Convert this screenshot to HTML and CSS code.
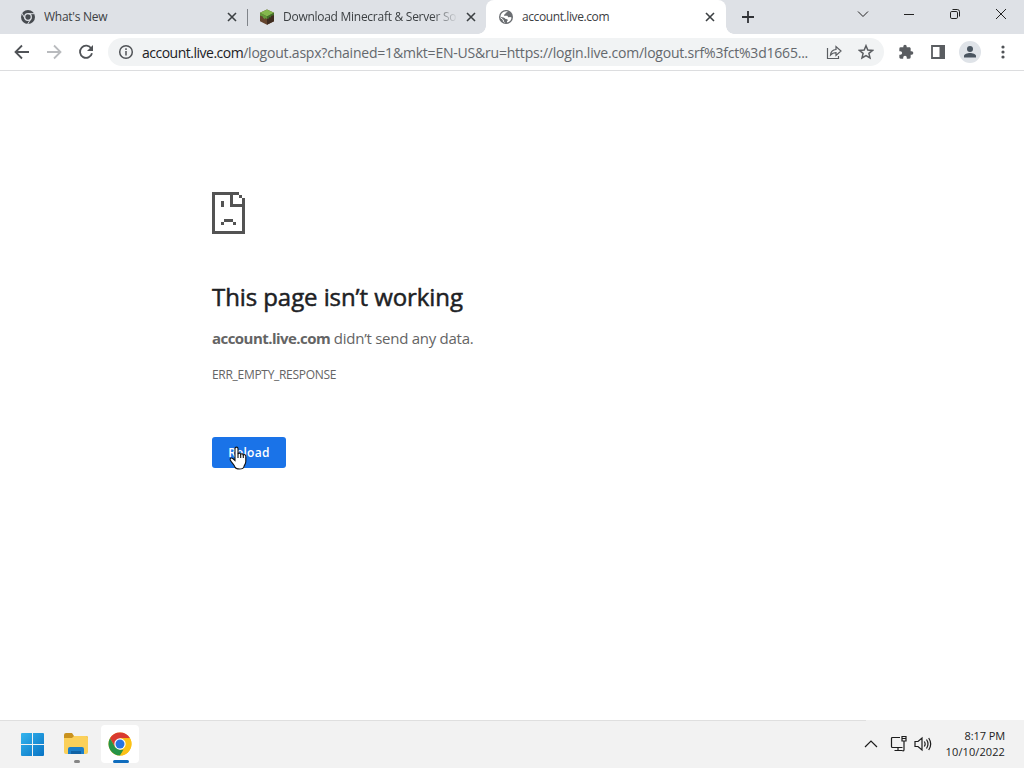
FILE: index.html
```html
<!DOCTYPE html>
<html lang="en">
<head>
    <meta charset="UTF-8">
    <meta name="viewport" content="width=device-width, initial-scale=1.0">
    <title>account.live.com</title>
    <link rel="stylesheet" href="styles.css">
</head>
<body>
    <!-- Tabs -->
    <div class="tabstrip">
        <div class="tab first">
            <svg class="favicon" viewBox="0 0 16 16">
                <circle cx="8" cy="8" r="7" fill="#474b50"/>
                <circle cx="8" cy="8" r="3.3" fill="#474b50" stroke="#dee1e6" stroke-width="1.3"/>
                <path d="M8 4.7h6.4M5.1 9.7L1.9 4.2M10.9 9.7L7.7 15" stroke="#dee1e6" stroke-width="1"/>
            </svg>
            <span class="tab-title">What's New</span>
            <svg class="tab-close" viewBox="0 0 10 10"><path d="M1 1l8 8M9 1L1 9"/></svg>
        </div>
        <div class="tab second">
            <svg class="favicon" viewBox="0 0 16 16">
                <path d="M8 .5l7 3.3v8.4l-7 3.6-7-3.6V3.8z" fill="#65452e"/>
                <path d="M8 .5l7 3.3-7 3.7-7-3.7z" fill="#84b84d"/>
                <path d="M1 3.8l7 3.7V10l-2-1v1.2L4 8.8v-1L1 6.5z" fill="#63983a"/>
                <path d="M15 3.8L8 7.5V10l2-.6V8.3l2 .2V7l3-.8z" fill="#41702a"/>
                <path d="M8 10v5.8l7-3.6V6.2l-3 .8v1.5l-2-.2v1.1z" fill="#3f2c20"/>
            </svg>
            <span class="tab-title fade">Download Minecraft &amp; Server So</span>
            <svg class="tab-close" viewBox="0 0 10 10"><path d="M1 1l8 8M9 1L1 9"/></svg>
        </div>
        <div class="tab active">
            <svg class="favicon" viewBox="0 0 16 16">
                <circle cx="8" cy="8" r="7" fill="#6b6e72"/>
                <path d="M9.6 2.3c-.2 1-.9 1.4-1.900 1.500-.4.7 0 1.200-.8 1.500-.9.2-1.100.8-.7 1.400h3c.7.3.6 1 1 1.500.9.2 1.200-.4 2-.2l1.300.5c0 2.500-2 4.800-4.500 5.100v-1.400c.8-.3 1-1.100.5-1.700-.8-.5-1.800-.2-2.300-1C6.800 8.300 4.500 8.200 2.500 7.900c0-3 2.500-5.600 5.500-5.700z" fill="#fff"/>
                <path d="M2.3 8.6l3 2.3v1.3l1.3 1.3" stroke="#fff" stroke-width="1" fill="none"/>
            </svg>
            <span class="tab-title">account.live.com</span>
            <svg class="tab-close" viewBox="0 0 10 10"><path d="M1 1l8 8M9 1L1 9"/></svg>
        </div>
        <svg class="new-tab" viewBox="0 0 12 12"><path d="M6 0v12M0 6h12"/></svg>
        <div class="window-controls">
            <svg viewBox="0 0 12 12"><path d="M1 3.5l5 5 5-5"/></svg>
            <svg viewBox="0 0 12 12"><path d="M1 6.5h10"/></svg>
            <svg viewBox="0 0 12 12"><rect x="1.5" y="3.5" width="7" height="7" rx="1.3"/><path d="M3.5 1.5H8.300a2.200 2.200 0 0 1 2.200 2.200V8.500"/></svg>
            <svg viewBox="0 0 12 12"><path d="M1 1l10 10M11 1L1 11"/></svg>
        </div>
    </div>

    <!-- Toolbar -->
    <div class="toolbar">
        <svg class="nav" viewBox="0 0 16 16"><path d="M15 8H2M8 1.5L1.5 8 8 14.5"/></svg>
        <svg class="nav disabled" viewBox="0 0 16 16"><path d="M1 8h13M8 1.5L14.5 8 8 14.5"/></svg>
        <svg class="nav" viewBox="0 0 16 16"><path d="M13.3 4.6A6.1 6.1 0 1 0 14 9.3"/><path d="M15 1v6H9z" class="solid"/></svg>
        <div class="omnibox">
            <svg class="info" viewBox="0 0 16 16"><circle cx="8" cy="8" r="6.3"/><path d="M8 7v4.5M8 4.3v1.7"/></svg>
            <span class="url"><b>account.live.com</b>/logout.aspx?chained=1&amp;mkt=EN-US&amp;ru=https://login.live.com/logout.srf%3fct%3d1665...</span>
            <svg class="share" viewBox="0 0 16 16"><path d="M1.5 4v10.500h11v-2.500M4.500 11c.3-3.500 2.200-5.300 5.500-5.500V2.500l5 4.500-5 4.500V8.700c-2.500 0-4 .6-5.500 2.300z"/></svg>
            <svg class="star" viewBox="0 0 16 16"><path d="M8 1.7l1.8 4.300 4.700.4-3.600 3 1.100 4.500L8 11.500l-4 2.400 1.100-4.500-3.600-3 4.700-.4z"/></svg>
        </div>
        <svg class="tool" viewBox="0 0 24 24"><path d="M20.500 11H19V7c0-1.100-.9-2-2-2h-4V3.500a2.500 2.500 0 0 0-5 0V5H4a2 2 0 0 0-2 2v3.800h1.500a2.700 2.700 0 0 1 0 5.400H2V20c0 1.100.9 2 2 2h3.800v-1.500a2.700 2.700 0 0 1 5.400 0V22H17a2 2 0 0 0 2-2v-4h1.500a2.500 2.500 0 0 0 0-5z" fill="#5a5d61"/></svg>
        <svg class="tool" viewBox="0 0 16 16"><path d="M2 2h12v12H2z" fill="none" stroke="#5a5d61" stroke-width="1.8"/><path d="M9.5 1H15v14H9.500z" fill="#5a5d61"/></svg>
        <svg class="avatar" viewBox="0 0 22 22"><circle cx="11" cy="11" r="11" fill="#dfe3e8"/><circle cx="11" cy="8" r="3" fill="#4a5560"/><path d="M5 16.5v-1.500c0-2 3.500-3 6-3s6 1 6 3v1.500z" fill="#4a5560"/></svg>
        <svg class="more" viewBox="0 0 4 14"><circle cx="2" cy="2" r="1.6"/><circle cx="2" cy="7" r="1.6"/><circle cx="2" cy="12" r="1.6"/></svg>
    </div>

    <!-- Error page -->
    <main class="error-page">
        <svg class="sad" viewBox="0 0 11 14" shape-rendering="crispEdges">
            <path d="M0 0h9v1h1v1h1v12H0zM1 1v12h9V5H6V1zM7 1v3h3V2H9V1z" fill-rule="evenodd"/>
            <path d="M3 3h1v2H3zM4 9h3v1H4zM3 10h1v1H3zM7 10h1v1H7z"/>
        </svg>
        <h1>This page isn’t working</h1>
        <p class="summary"><strong>account.live.com</strong> <span>didn’t send any data.</span></p>
        <p class="code">ERR_EMPTY_RESPONSE</p>
        <div class="reload">
            <button>Reload</button>
            <svg class="cursor" viewBox="0 0 18 24">
                <path d="M6 14.5V2.700C6 .6 9 .6 9 2.700V8c.5-1.300 2.500-1 2.700.4.600-1 2.400-.7 2.600.6.800-.8 2.500-.3 2.500 1.200v5.300c0 2.500-1.500 3.500-1.800 5-.3 2-1.500 2.500-4.500 2.500-3.200 0-4-.5-4.700-2.300C5 18.500 2.400 16.500 1.300 14c-.7-1.700 1.200-2.700 2.500-1.500z" fill="#fff" stroke="#111" stroke-width="1.1"/>
                <path d="M9 7.5V12M11.700 8.500V12M14.300 9V12" stroke="#111" stroke-width="1.1"/>
            </svg>
        </div>
    </main>

    <!-- Taskbar -->
    <div class="taskbar">
        <div class="task">
            <svg class="win" viewBox="0 0 23 23">
                <defs><linearGradient id="blue" x1="0" y1="0" x2="1" y2="1"><stop offset="0" stop-color="#35b5ee"/><stop offset="1" stop-color="#0873c4"/></linearGradient></defs>
                <path d="M1 0h10v11H0V1q0-1 1-1zM12 0h10q1 0 1 1v10H12zM0 12h11v11H1q-1 0-1-1zM12 12h11v10q0 1-1 1H12z" fill="url(#blue)"/>
            </svg>
        </div>
        <div class="task">
            <svg class="folder" viewBox="0 0 26 24">
                <path d="M1 3q0-2 2-2h6l2 3h12q2 0 2 2v14H1z" fill="#c9921f"/>
                <path d="M1 6h8l2-2h12q2 0 2 2v14q0 2-2 2H3q-2 0-2-2z" fill="#fbd05a"/>
                <path d="M5 22v-5q0-2 2-2h12q2 0 2 2v5z" fill="#1c7fc9"/>
                <path d="M8 19h10v3H8z" fill="#1062a5"/>
            </svg>
            <span class="dot"></span>
        </div>
        <div class="task current">
            <svg class="chrome" viewBox="0 0 24 24">
                <circle cx="12" cy="12" r="11.5" fill="#fbc116"/>
                <path d="M2 6.300A11.500 11.500 0 0 1 22 6.300H12L7 14.900z" fill="#d93a2f"/>
                <path d="M2 6.300l5 8.600 5 2.900h5L12 23.500A11.500 11.500 0 0 1 2 6.300z" fill="#269447"/>
                <path d="M12 6.300h10a11.500 11.500 0 0 1-10 17.200l5-8.600z" fill="#fbc116"/>
                <circle cx="12" cy="12" r="5.7" fill="#fff"/>
                <circle cx="12" cy="12" r="4.5" fill="#2874e0"/>
            </svg>
            <span class="dot"></span>
        </div>
        <div class="tray">
            <svg class="chevron" viewBox="0 0 14 8"><path d="M1 7l6-6 6 6"/></svg>
            <svg class="network" viewBox="0 0 18 18"><path d="M10 2.5H2.500q-1 0-1 1v8q0 1 1 1h10M8 12.500v3M4.500 15.500h8M12 1.500h4v4.500h-4zM14 6v9q0 1-1.500 1M12 3.500h4"/></svg>
            <svg class="volume" viewBox="0 0 18 16"><path d="M1 5.500v5h3l4 3.500V2L4 5.500zM10.300 5.500q1.700 2.500 0 5M12.500 3.500q3 4.500 0 9M14.700 2q4 6 0 12"/></svg>
            <div class="clock"><div class="time">8:17 PM</div><div class="date">10/10/2022</div></div>
        </div>
    </div>
</body>
</html>
```
FILE: styles.css
```css
* {
    box-sizing: border-box;
}

body {
    margin: 0;
    width: 1024px;
    height: 768px;
    overflow: hidden;
    display: flex;
    flex-direction: column;
    font-family: "Open Sans", "Noto Sans", sans-serif;
    background: #fff;
    color: #3c4043;
}

svg {
    display: block;
    flex: none;
    fill: none;
}

/* Tabs */
.tabstrip {
    display: flex;
    height: 34px;
    background: #dee1e6;
}

.tab {
    display: flex;
    align-items: center;
    height: 34px;
    font-size: 12px;
}

.tab.first {
    width: 248px;
    padding: 0 11px 0 20px;
    background: linear-gradient(#80848a, #80848a) right 9px / 1px 17px no-repeat;
}

.tab.second {
    width: 238px;
    padding: 0 10px 0 11px;
}

.tab.active {
    width: 240px;
    padding: 0 11px 0 12px;
    background: #fff;
    border-radius: 8px 8px 0 0;
    position: relative;
}

/* Flared feet of the active tab */
.tab.active::before,
.tab.active::after {
    content: "";
    position: absolute;
    bottom: 0;
    width: 8px;
    height: 8px;
}

.tab.active::before {
    left: -8px;
    background: radial-gradient(circle at 0 0, transparent 7.5px, #fff 8px);
}

.tab.active::after {
    right: -8px;
    background: radial-gradient(circle at 100% 0, transparent 7.5px, #fff 8px);
}

.favicon {
    width: 16px;
    height: 16px;
    margin-right: 8px;
}

.tab-title {
    flex: 1;
    overflow: hidden;
    white-space: nowrap;
    line-height: 18px;
    letter-spacing: -0.27px;
}

.active .tab-title {
    letter-spacing: -0.4px;
}

.tab-title.fade {
    margin-right: 8px;
    -webkit-mask-image: linear-gradient(to right, #000 85%, transparent);
    mask-image: linear-gradient(to right, #000 85%, transparent);
}

.tab-close {
    width: 10px;
    height: 10px;
    stroke: #3c4043;
    stroke-width: 1.6;
}

.new-tab {
    width: 12px;
    height: 12px;
    margin: 11px 0 0 16px;
    stroke: #303236;
    stroke-width: 1.8;
}

.window-controls {
    display: flex;
    gap: 34px;
    margin: 8px 17px 0 auto;
}

.window-controls svg {
    width: 12px;
    height: 12px;
    stroke: #222;
    stroke-width: 1;
}

/* Toolbar */
.toolbar {
    display: flex;
    align-items: center;
    height: 37px;
    padding: 0 19px 0 14px;
    border-bottom: 1px solid #dcdddf;
}

.nav {
    width: 16px;
    height: 16px;
    margin-right: 16px;
    stroke: #505357;
    stroke-width: 1.8;
}

.nav.disabled {
    stroke: #b9bbbe;
}

.nav .solid {
    fill: #505357;
    stroke: none;
}

.omnibox {
    display: flex;
    align-items: center;
    width: 776px;
    height: 28px;
    margin-left: -2px;
    padding: 0 10px;
    border-radius: 14px;
    background: #f1f3f4;
}

.info {
    width: 16px;
    height: 16px;
    margin-right: 8px;
    stroke: #505357;
    stroke-width: 1.5;
}

.url {
    width: 684px;
    padding-top: 1px;
    font-size: 14px;
    line-height: 20px;
    letter-spacing: -0.21px;
    white-space: nowrap;
    color: #64686d;
}

.url b {
    font-weight: 400;
    letter-spacing: -0.5px;
    color: #202124;
}

.share,
.star {
    width: 16px;
    height: 16px;
    stroke: #5a5d61;
    stroke-width: 1.2;
}

.star {
    margin-left: 16px;
    stroke-width: 1.5;
}

.tool {
    width: 16px;
    height: 16px;
    margin-left: 16px;
}

.omnibox + .tool {
    margin-left: 14px;
}

.avatar {
    width: 22px;
    height: 22px;
    margin-left: 13px;
}

.more {
    width: 4px;
    height: 14px;
    margin-left: auto;
    fill: #505357;
}

/* Error page */
.error-page {
    flex: 1;
    padding: 121px 0 0 212px;
    color: #646464;
}

.sad {
    width: 33px;
    height: 42px;
    fill: #535353;
}

h1 {
    margin: 47px 0 0;
    font-size: 24px;
    font-weight: 400;
    line-height: 32px;
    letter-spacing: -0.08px;
    color: #202124;
    -webkit-text-stroke: 0.5px #202124;
}

.summary {
    margin: 15px 0 0;
    font-size: 15px;
    line-height: 20px;
    letter-spacing: -0.26px;
}

.summary strong {
    letter-spacing: -0.54px;
}

.code {
    margin: 18px 0 0;
    font-size: 12px;
    line-height: 18px;
    letter-spacing: -0.3px;
}

.reload {
    position: relative;
    width: 74px;
    margin-top: 53px;
}

.reload button {
    display: block;
    width: 74px;
    height: 31px;
    padding: 0;
    border: 0;
    border-radius: 3px;
    background: #1a73e8;
    color: #fff;
    font: 600 12px/31px "Open Sans", sans-serif;
    letter-spacing: 0.3px;
}

.cursor {
    position: absolute;
    left: 17px;
    top: 9px;
    width: 18px;
    height: 24px;
}

/* Taskbar */
.taskbar {
    display: flex;
    align-items: center;
    height: 48px;
    padding-left: 13px;
    background: linear-gradient(#dfdfdf, #dfdfdf) left top / 866px 1px no-repeat #f2f2f2;
}

.task {
    position: relative;
    display: flex;
    align-items: center;
    justify-content: center;
    width: 38px;
    height: 38px;
    margin-right: 6px;
    border-radius: 4px;
}

.task.current {
    background: #fff;
}

.win {
    width: 23px;
    height: 23px;
}

.folder {
    width: 26px;
    height: 24px;
}

.chrome {
    width: 24px;
    height: 24px;
}

.dot {
    position: absolute;
    left: 17px;
    bottom: 0;
    width: 6px;
    height: 3px;
    border-radius: 2px;
    background: #858585;
}

.current .dot {
    left: 12px;
    width: 16px;
    background: #0f6cbd;
}

.tray {
    display: flex;
    align-items: center;
    margin-left: auto;
    margin-right: 19px;
}

.tray svg {
    stroke: #1c1c1c;
    stroke-width: 1.2;
}

.chevron {
    width: 14px;
    height: 8px;
}

.network {
    width: 18px;
    height: 18px;
    margin-left: 12px;
}

.volume {
    width: 18px;
    height: 16px;
    margin-left: 6px;
}

.clock {
    width: 73px;
    font-size: 11px;
    line-height: 16px;
    letter-spacing: -0.1px;
    text-align: right;
    color: #222;
}

.date {
    letter-spacing: 0.1px;
}
```
